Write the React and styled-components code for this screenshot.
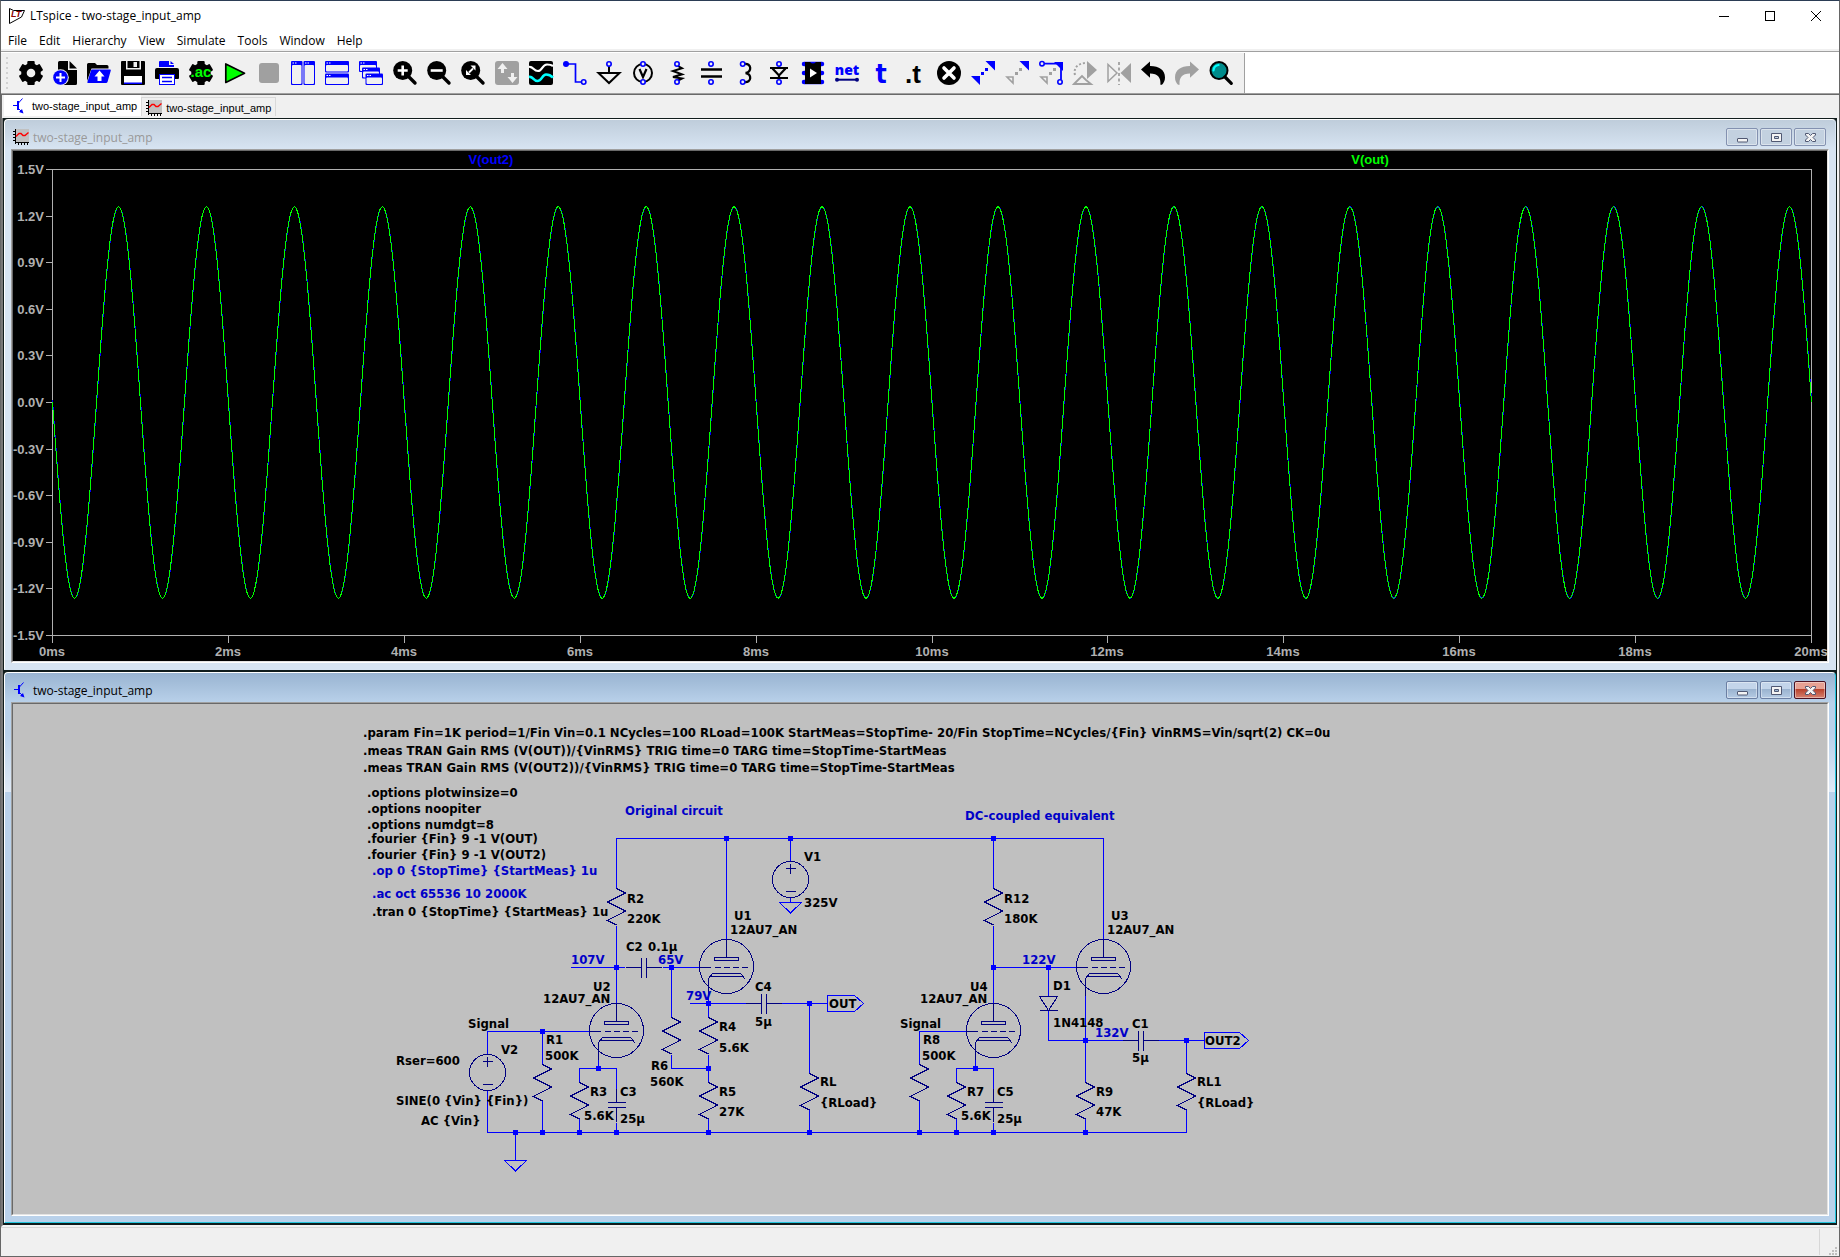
import React from "react";
import styled, { createGlobalStyle, css } from "styled-components";

const uiFont = `"Open Sans", "Noto Sans", sans-serif`
const tahoma = `"DejaVu Sans Condensed", "DejaVu Sans", sans-serif`
const arial = `"Liberation Sans", Arial, sans-serif`

const face = "#f0f0f0"
const blue = "#0000ff"
const navy = "#000080"
const comment = "#0000c8"
const grey = "#a0a0a0"

const GlobalStyle = createGlobalStyle`
  * {
    box-sizing: border-box;
  }
  body {
    margin: 0;
    background: ${face};
    font-family: ${uiFont};
    font-size: 12px;
    color: #000;
  }
  button {
    margin: 0;
    padding: 0;
    border: 0;
    background: none;
    font: inherit;
    color: inherit;
  }
  svg {
    display: block;
  }
`

//Application frame
const Frame = styled.div`
  display: flex;
  flex-direction: column;
  min-height: 100vh;
  border: 1px solid #666;
  border-top-color: #2b3d55;
`
const TitleBar = styled.header`
  display: flex;
  align-items: center;
  height: 29px;
  padding-left: 8px;
  background: #fff;
`
const Title = styled.h1`
  flex: 1;
  margin: 0;
  padding-left: 4px;
  font-size: 12px;
  font-weight: 400;
`
const CaptionButton = styled.button`
  display: grid;
  place-items: center;
  width: 46px;
  height: 29px;
`
const MenuBar = styled.nav`
  display: flex;
  align-items: flex-end;
  height: 21px;
  padding-left: 1px;
  background: #fff;
  border-bottom: 2px solid ${face};
`
const MenuItem = styled.button`
  padding: 0 6px;
  line-height: 17px;
`

//Toolbar
const ToolbarRow = styled.div`
  display: flex;
  height: 44px;
  background: #fff;
  border-top: 1px solid ${grey};
  border-bottom: 1px solid #696969;
  box-shadow: inset 0 -1px 0 ${grey};
  padding: 1px 0;
`
const Toolbar = styled.div`
  display: flex;
  align-items: center;
  gap: 10px;
  padding: 0 11px 0 4px;
  background: ${face};
  border-right: 1px solid ${grey};
`
const Grip = styled.span`
  width: 4px;
  height: 32px;
  background: radial-gradient(circle, #b4b4b4 1px, transparent 1px) center / 4px 5px repeat-y;
`
const ToolButton = styled.button`
  width: 24px;
  height: 24px;
  flex: none;
  svg {
    overflow: visible;
  }
`

//Document tabs
const TabStrip = styled.div`
  display: flex;
  align-items: flex-end;
  height: 23px;
  padding: 0 0 2px 2px;
  border-left: 1px solid #696969;
`
const Tab = styled.button`
  display: flex;
  align-items: center;
  gap: 4px;
  font-family: ${arial};
  font-size: 11px;
  ${props => props.$active ? css`
    height: 21px;
    padding: 0 4px 0 8px;
    background: #fff;
  ` : css`
    height: 19px;
    padding: 1px 4px 0;
    border: 1px solid #d9d9d9;
    border-bottom: 0;
  `}
`

//MDI child windows
const Workspace = styled.main`
  display: flex;
  flex-direction: column;
  gap: 2px;
  padding: 1px 1px 2px;
  background: #101c1c;
  border-left: 2px solid #777;
  border-right: 2px solid #f4f4f4;
  border-bottom: 2px solid #f4f4f4;
`
const Child = styled.section`
  padding: 0 6px 6px;
  border: 1px solid #fff;
  border-radius: 4px 4px 0 0;
  ${props => props.$active ? css`
    border-right-color: #22c4dc;
    border-bottom-color: #22c4dc;
    background: linear-gradient(#99b4d1, #b9d1ea 30px, #b9d1ea 60px, #e0eaf6 119px, #b9d1ea 119px);
  ` : css`
    border-right-color: #d7e4f2;
    border-bottom-color: #d7e4f2;
    background: linear-gradient(#bfcddb, #d7e4f2 29px);
  `}
`
const ChildBar = styled.header`
  display: flex;
  align-items: center;
  gap: 4px;
  height: 29px;
  padding: 5px 3px 0 2px;
`
const ChildTitle = styled.h2`
  flex: 1;
  margin: 0;
  font-size: 12px;
  font-weight: 400;
  color: ${props => props.$active ? "#000" : "#999"};
`
const ChildButtons = styled.div`
  display: flex;
  gap: 2px;
  align-self: flex-start;
  padding-top: 3px;
`
const buttonFill = {
  idle: css`
    border-color: #8391b0;
    background: #c3d1e0;
  `,
  active: css`
    border-color: #6b7fa3;
    background: linear-gradient(#c3d5ea 45%, #9ab3cf 45%, #b5cbe4);
  `,
  close: css`
    border-color: #4a1020;
    background: linear-gradient(#e6a193 45%, #b8412b 45%, #d68271);
  `,
}
const ChildButton = styled.button`
  display: grid;
  place-items: center;
  width: 32px;
  height: 18px;
  border: 1px solid;
  border-radius: 2px;
  box-shadow: inset 0 0 0 1px rgba(255, 255, 255, 0.4);
  ${props => buttonFill[props.$kind]}
`
const Client = styled.div`
  border: 1px solid;
  border-color: ${grey} #fff #fff ${grey};
`
const Canvas = styled.svg`
  width: 100%;
  height: auto;
  border: 1px solid;
  border-color: #696969 #e3e3e3 #e3e3e3 #696969;
  background: ${props => props.$paper};
`
const PlotText = styled.text`
  font: bold 13px ${arial};
  fill: ${props => props.$ink || "#b0b0b0"};
`
const Label = styled.text`
  font: bold 13px ${tahoma};
  fill: ${props => props.$ink || "#000"};
`

const StatusBar = styled.footer`
  display: flex;
  flex: 1;
  justify-content: flex-end;
  align-items: flex-end;
  min-height: 29px;
  border-top: 1px solid #d7d7d7;
  background: ${face};
  padding: 1px 2px 1px 0;
`
const StatusGrip = styled.div`
  align-self: stretch;
  display: flex;
  align-items: flex-end;
  justify-content: flex-end;
  width: 18px;
  border-left: 1px solid #d7d7d7;
`

//---- Icons ----
const Pin = ({ x = 12, y }) => (
  <circle cx={x} cy={y} r="2.2" fill={face} stroke={blue} strokeWidth="1.6" />
)
const Gear = ({ hole }) => (
  <>
    <circle cx="12" cy="12" r="9.8" />
    {[0, 60, 120].map(a => (
      <rect key={a} x="8.3" y="0" width="7.4" height="24" rx="1" transform={`rotate(${a} 12 12)`} />
    ))}
    {hole && <circle cx="12" cy="12" r="4.3" fill={face} />}
  </>
)
const MiniWindow = ({ x, y, w, h }) => (
  <>
    <rect x={x} y={y} width={w} height={h} rx="1" fill={blue} />
    <rect x={x + 1} y={y + 4} width={w - 2} height={h - 5} rx="1" fill={face} />
    <path d={`M${x + 1.5} ${y + 2}h1.5M${x + 4} ${y + 2}h1.5`} stroke="#fff" />
  </>
)
const Lens = ({ children }) => (
  <>
    <circle cx="9.7" cy="9.5" r="9.5" />
    <path d="M15 15l7 7" stroke="#000" strokeWidth="3.4" strokeLinecap="round" />
    <g stroke="#fff" strokeWidth="2.6" fill="none">{children}</g>
  </>
)
const TurnArrow = ({ fill }) => (
  <path fill={fill} d="M0 8.5L9 0.5v4.6C18 5 24 9 24 16.5c0 3-1.2 5.5-3 7.2h-1.6C20 17 17 12.5 9 12.5v4.3z" />
)

const tools = [
  ["Settings", <Gear hole />],
  ["New schematic", <>
    <path d="M5 1.5a1.5 1.5 0 0 1 1.5-1.5H15v9h9v13.5a1.5 1.5 0 0 1-1.5 1.5H6.5A1.5 1.5 0 0 1 5 22.5z" />
    <path d="M16.5 0L24 7.5h-7.5z" />
    <circle cx="7.5" cy="16.5" r="8.3" fill={face} />
    <circle cx="7.5" cy="16.5" r="7.3" fill={blue} />
    <path d="M7.5 12v9M3 16.5h9" stroke="#fff" strokeWidth="2" />
  </>],
  ["Open", <>
    <path d="M0 20V3.5Q0 2 1.5 2H8l2 2h10q1.5 0 1.5 1.5V7.5H4.5z" />
    <path d="M5 8.5h18q1 0 .8 1L20.5 21q-.3 1-1.5 1H1q-1 0-.6-1L4 9.5q.3-1 1-1z" fill={blue} />
    <path d="M12.5 9.5l5 6h-3V20h-4v-4.5h-3z" fill="#fff" />
  </>],
  ["Save", <>
    <path d="M1 0h22q1 0 1 1v22q0 1-1 1H1q-1 0-1-1V1q0-1 1-1z" />
    <rect x="5" y="0" width="1.5" height="8" fill={face} />
    <rect x="5" y="7" width="15" height="1.5" fill={face} />
    <rect x="12.5" y="1" width="3.5" height="5" fill={face} />
    <rect x="18.5" y="0" width="1.5" height="8" fill={face} />
    <rect x="3" y="15" width="18" height="7" fill="#fff" />
    <rect x="3" y="21.5" width="18" height="1.5" fill={blue} />
  </>],
  ["Print", <>
    <path d="M4 6V1q0-1 1-1h9v4h5v2z" fill={blue} />
    <path d="M15.5 0l3.5 3h-3.5z" fill={blue} />
    <path d="M2 7h20q2 0 2 2v8q0 1-1 1h-3v-4H4v4H1q-1 0-1-1V9q0-2 2-2z" />
    <rect x="4.5" y="13.5" width="15" height="10" fill="#fff" stroke={blue} />
    <path d="M7 16.5h10M7 20.5h10" stroke={blue} strokeWidth="1.5" />
  </>],
  ["Configure analysis", <>
    <Gear />
    <text x="12" y="16" textAnchor="middle" fill="#00ff00" fontFamily={arial} fontWeight="bold" fontSize="15">.ac</text>
  </>],
  ["Run", <path d="M2.8 3v18.5L21.5 12.2z" fill="#00ff00" stroke="#000" strokeWidth="1.7" strokeLinejoin="round" />],
  ["Stop", <rect x="2" y="2" width="20" height="20" rx="3" fill={grey} />],
  ["Tile vertically", <><MiniWindow x={0} y={0} w={11.5} h={24} /><MiniWindow x={12.5} y={0} w={11.5} h={24} /></>],
  ["Tile horizontally", <><MiniWindow x={0} y={0} w={24} h={11.5} /><MiniWindow x={0} y={12.5} w={24} h={11.5} /></>],
  ["Cascade", <><MiniWindow x={0} y={0} w={18} h={11} /><MiniWindow x={3} y={6.5} w={18} h={11} /><MiniWindow x={6.5} y={12.5} w={17.5} h={11.5} /></>],
  ["Zoom in", <Lens><path d="M9.7 4.5v10M4.7 9.5h10" /></Lens>],
  ["Zoom out", <Lens><path d="M3.7 9.5h12" /></Lens>],
  ["Zoom to fit", <Lens>
    <path d="M8 11.5l4-4" strokeWidth="1.8" />
    <path d="M9.5 4.5h5v5zM5 9v5h5z" fill="#fff" stroke="none" />
  </Lens>],
  ["Autorange", <>
    <rect width="24" height="24" rx="3" fill={grey} />
    <path d="M7.5 2l5 6H9v4H6V8H2.5zM17.5 22l-5-6H16v-4h3v4h3.5z" fill={face} />
  </>],
  ["Pick visible traces", <>
    <rect width="24" height="24" rx="2" />
    <path d="M0 6C4 5 4.500 10 9 10S13 3.500 18 3.500q4 0 6 1.500" fill="none" stroke="#fff" strokeWidth="2.2" />
    <path d="M0 16C4 15 4 20 8.500 20S13 13.500 17 13.500q4 0 7 3" fill="none" stroke="#00ffff" strokeWidth="2.6" />
  </>],
  ["Wire", <>
    <path d="M3 3h9.5v18H18" fill="none" stroke={blue} strokeWidth="1.7" />
    <circle cx="3" cy="3" r="3" fill={blue} />
    <Pin x={20.7} y={21} />
  </>],
  ["Ground", <>
    <path d="M12 5v7M1.5 12h21L12 22z" fill="none" stroke="#000" strokeWidth="2" />
    <Pin y={3} />
  </>],
  ["Voltage source", <>
    <circle cx="12" cy="12" r="9" fill="none" stroke="#000" strokeWidth="2" />
    <path d="M8.5 8l3.5 8 3.5-8" fill="none" stroke="#000" strokeWidth="2.2" />
    <Pin y={3} /><Pin y={21} />
  </>],
  ["Resistor", <>
    <path d="M13 5l4 2.3-9 2.7 9 3.3-9 2.7 9 1.5-4 2" fill="none" stroke="#000" strokeWidth="2" />
    <Pin y={3} /><Pin y={21} />
  </>],
  ["Capacitor", <><path d="M2 8.5h21M2 15.5h21" stroke="#000" strokeWidth="2.5" /><Pin y={3} /><Pin y={21} /></>],
  ["Inductor", <>
    <path d="M11 3c8-1.5 8 8.5 1.5 9 6.5 .5 6.5 10.5-1.5 9" fill="none" stroke="#000" strokeWidth="2.3" />
    <Pin x={9.7} y={3} /><Pin x={9.7} y={21} />
  </>],
  ["Diode", <>
    <path d="M3 7h18M5.5 7.5L12 14.5l6.5-7M3 17h18M12 14v4" fill="none" stroke="#000" strokeWidth="2.2" />
    <Pin y={3} /><Pin y={21} />
  </>],
  ["Component", <>
    {[3, 12, 21].map(y => <path key={y} d={`M3 ${y}h18`} stroke={blue} strokeWidth="4.5" strokeLinecap="round" />)}
    <path d="M4 1h5q3 3 6 0h5v22H4z" />
    <path d="M9 7.5l7 4.5-7 4.5z" fill="#fff" />
  </>],
  ["Net name", <>
    <text x="12" y="14" textAnchor="middle" fill={blue} fontFamily={uiFont} fontWeight="800" fontSize="14">net</text>
    <path d="M2 18.7h20" stroke={navy} strokeWidth="2" />
    <circle cx="2" cy="18.7" r="2" fill={navy} /><circle cx="22" cy="18.7" r="2" fill={navy} />
  </>],
  ["Text", <text x="12" y="22" textAnchor="middle" fill={blue} fontFamily={tahoma} fontWeight="bold" fontSize="26">t</text>],
  ["SPICE directive", <text x="10" y="22" textAnchor="middle" fontFamily={arial} fontWeight="bold" fontSize="26">.t</text>],
  ["Delete", <>
    <circle cx="12" cy="12" r="12" />
    <path d="M7 7l10 10M17 7L7 17" stroke="#fff" strokeWidth="3.6" strokeLinecap="round" />
  </>],
  ["Move", <>
    <path d="M14.5 0H24v9.5zM0 15h9v9z" fill={blue} />
    <path d="M14 7h3v3h-3zM10 11h3v3h-3z" fill={blue} />
  </>],
  ["Stretch", <>
    <path d="M14.5 0H24v9.5z" fill={blue} />
    <path d="M14 7h3v3h-3zM10 11h3v3h-3z" fill={grey} />
    <path d="M2 16h6v6z" fill="none" stroke={grey} strokeWidth="1.6" />
  </>],
  ["Drag", <>
    <path d="M15 1h9v9z" fill={blue} />
    <path d="M5 2.7h17v16" fill="none" stroke={blue} strokeWidth="1.8" />
    <path d="M14 7h3v3h-3zM10 11h3v3h-3z" fill={grey} />
    <path d="M2 16h6v6z" fill="none" stroke={grey} strokeWidth="1.6" />
    <Pin x={3} y={2.7} /><Pin x={21} y={21} />
  </>],
  ["Rotate", <>
    <path d="M14 0l10 9-10 9z" fill={grey} />
    <path d="M2 14C0 6 6 2 14 2" fill="none" stroke={grey} strokeWidth="2" strokeDasharray="2 2" />
    <path d="M1 23l4-4 4-4 4 4 5 4z" fill={face} stroke={grey} strokeWidth="1.8" />
  </>],
  ["Mirror", <>
    <path d="M1 3.5v17L10 12z" fill="none" stroke={grey} strokeWidth="1.5" />
    <path d="M24 2v20L13.5 12z" fill={grey} />
    <path d="M12 1v23" stroke={grey} strokeWidth="1.8" strokeDasharray="3 2.5" />
  </>],
  ["Undo", <TurnArrow fill="#000" />],
  ["Redo", <g transform="matrix(-1 0 0 1 24 0)"><TurnArrow fill={grey} /></g>],
  ["Find", <>
    <circle cx="10" cy="9.5" r="8.5" fill="#008b8b" stroke="#000" strokeWidth="2" />
    <path d="M4.5 9.5Q5 4.5 9.5 4" fill="none" stroke="#00ffff" strokeWidth="2.2" strokeLinecap="round" />
    <path d="M16 16l6.3 6.3" stroke="#000" strokeWidth="3.2" strokeLinecap="round" />
  </>],
]

const PlotIcon = () => (
  <svg width="16" height="16" viewBox="0 0 16 16" shapeRendering="crispEdges" aria-hidden="true">
    <rect x="2" width="14" height="13" fill="#c0c0c0" />
    <path d="M2.5 0v15M2 13.5h14M0 2.5h2M0 5.5h2M0 8.5h2M0 11.5h2M5.5 14v2M8.5 14v2M11.5 14v2M14.5 14v2" stroke="#000" />
    <path d="M3 7.5l3-3 2 0 2 2 2 0 3.5-3" fill="none" stroke="#f00" strokeWidth="1.4" shapeRendering="auto" />
  </svg>
)
const BjtIcon = () => (
  <svg width="16" height="16" viewBox="0 0 16 16" aria-hidden="true">
    <path d="M1 7.5h5M10.5 .5l-4.5 5M6 10l4 4" stroke={blue} />
    <path d="M6 3v9" stroke={blue} strokeWidth="2" />
    <path d="M11.5 15.5l-4.5-1.5 3-3z" fill={blue} />
  </svg>
)
const AppIcon = () => (
  <svg width="17" height="16" viewBox="0 0 17 16" aria-hidden="true">
    <path d="M.5 .5L4.500 2.500h11L12.500 9 .5 15.500z" fill="#fff" stroke="#000" />
    <text x="2" y="9" fill="#8b0000" fontFamily={arial} fontWeight="bold" fontStyle="italic" fontSize="9">LT</text>
  </svg>
)

const glyphs = {
  Minimize: <rect x="3.5" y="6.5" width="10" height="3.5" rx=".5" />,
  Maximize: <path fillRule="evenodd" d="M3.5 1.5h10v8h-10zM6.5 4.5v2h4v-2z" />,
  Close: <path d="M3.5 1.5h3l2 2 2-2h3v1.5l-2.5 2.5 2.5 2.5v1.5h-3l-2-2-2 2h-3v-1.5l2.5-2.5-2.5-2.5z" />,
}

const ChildWindow = ({ active, icon, title, children }) => (
  <Child $active={active}>
    <ChildBar>
      {icon}
      <ChildTitle $active={active}>{title}</ChildTitle>
      <ChildButtons>
        {Object.keys(glyphs).map(name => (
          <ChildButton
            key={name}
            aria-label={name}
            $kind={!active ? "idle" : name === "Close" ? "close" : "active"}
          >
            <svg width="17" height="11" viewBox="0 0 17 11" fill="#f4f4f4" stroke="#505872">{glyphs[name]}</svg>
          </ChildButton>
        ))}
      </ChildButtons>
    </ChildBar>
    <Client>{children}</Client>
  </Child>
)

//---- Waveform plot ----
const plot = { left: 39, top: 18, width: 1759, height: 466 }
const cycles = 20
const peak = 1.26

const trace = (phase) => {
  const points = []
  for (let x = 0; x <= plot.width; x++) {
    const v = -peak * Math.sin((x / plot.width) * cycles * 2 * Math.PI + phase)
    points.push(`${plot.left + x},${(plot.top + plot.height * (0.5 - v / 3)).toFixed(1)}`)
  }
  return points.join(" ")
}

const Waveform = () => (
  <Canvas viewBox="0 0 1814 510" $paper="#000" role="img" aria-label="V(out) and V(out2) against time">
    <g transform="translate(.5 .5)" fill="none" shapeRendering="crispEdges">
      <rect x={plot.left} y={plot.top} width={plot.width} height={plot.height} stroke="#b0b0b0" />
      {Array.from({ length: 11 }, (_, i) => {
        const x = Math.round(plot.left + plot.width * i / 10)
        const y = Math.round(plot.top + plot.height * i / 10)
        return <path key={i} d={`M${x} 484v7M${plot.left - 7} ${y}h7`} stroke="#b0b0b0" />
      })}
      <polyline points={trace(-0.015)} stroke={blue} />
      <polyline points={trace(0)} stroke="#00ff00" />
    </g>
    {Array.from({ length: 11 }, (_, i) => (
      <React.Fragment key={i}>
        <PlotText x={31} y={Math.round(plot.top + 5 + plot.height * i / 10)} textAnchor="end">
          {(1.5 - i * 0.3).toFixed(1).replace("-0.0", "0.0")}V
        </PlotText>
        <PlotText x={Math.round(plot.left + plot.width * i / 10)} y={505} textAnchor="middle">
          {i * 2}ms
        </PlotText>
      </React.Fragment>
    ))}
    <PlotText x={478} y={13} textAnchor="middle" $ink={blue}>V(out2)</PlotText>
    <PlotText x={1357} y={13} textAnchor="middle" $ink="#00ff00">V(out)</PlotText>
  </Canvas>
)

//---- Schematic ----
const Resistor = ({ x, y }) => (
  <path d={`M${x} ${y}l9 4.5l-18 9l18 9l-18 9.5l9 4.5`} stroke={navy} />
)
const CapH = ({ x, y }) => (
  <path d={`M${x - 18} ${y}H${x - 2}M${x + 3} ${y}H${x + 18}M${x - 2} ${y - 10}v20M${x + 3} ${y - 10}v20`} stroke={navy} />
)
const CapV = ({ x, y }) => (
  <path d={`M${x} ${y - 16}V${y - 2}M${x} ${y + 3}V${y + 17}M${x - 9} ${y - 2}h18M${x - 9} ${y + 3}h18`} stroke={navy} />
)
const Source = ({ x, y }) => (
  <>
    <circle cx={x} cy={y} r="18" stroke={navy} />
    <path d={`M${x - 5} ${y - 11}h10M${x} ${y - 16}v10M${x - 5} ${y + 12}h10`} stroke={navy} />
  </>
)
const Ground = ({ x, y }) => <path d={`M${x - 11} ${y}h22l-11 10.5z`} stroke={blue} />
const Triode = ({ x, y }) => (
  <g stroke={navy}>
    <circle cx={x} cy={y - 1} r="27" />
    <path d={`M${x} ${y - 28}v18M${x - 12} ${y - 10}h24v3h-24z`} />
    <path d={`M${x - 27} ${y}h11M${x - 12} ${y}h6M${x - 3} ${y}h6M${x + 6} ${y}h6M${x + 15} ${y}h6`} />
    <path d={`M${x - 14} ${y + 6}h28l5 6M${x - 16} ${y + 9}h33M${x - 14} ${y + 6}l-4 5v17`} />
  </g>
)
const Port = ({ x, y, w }) => <path d={`M${x} ${y - 8}h${w - 9}l9 8l-9 8h-${w - 9}z`} stroke={blue} />

const wires = [
  "M616 888V838H1103V939", "M726 838V939", "M790 838V861", "M790 897V902",
  "M616 925V1003", "M570 967H624", "M662 967H699", "M671 967V1017", "M671 1054V1068H708",
  "M708 994V1017", "M708 1054V1082", "M708 1118V1132", "M689 1003H745", "M781 1003H827", "M809 1003V1073", "M809 1109V1132",
  "M487 1054V1031H588", "M542 1031V1064", "M542 1100V1132", "M487 1090V1132H1186V1109",
  "M598 1058V1068", "M579 1082V1068H616V1088", "M579 1118V1132", "M616 1122V1132", "M515 1132V1160",
  "M993 838V888", "M993 925V1003", "M993 967H1076", "M1048 967V996", "M1048 1010V1040H1122",
  "M1085 994V1082", "M1085 1118V1132", "M1158 1040H1204", "M1186 1040V1073",
  "M919 1064V1031H966", "M919 1100V1132", "M975 1058V1068", "M956 1082V1068H993V1088", "M956 1118V1132", "M993 1122V1132",
]
const nodes = [
  [726, 838], [790, 838], [993, 838], [616, 967], [671, 967], [993, 967], [1048, 967],
  [708, 1003], [809, 1003], [542, 1031], [1085, 1040], [1186, 1040], [598, 1068], [708, 1068], [975, 1068],
  [515, 1132], [542, 1132], [579, 1132], [616, 1132], [708, 1132], [809, 1132],
  [919, 1132], [956, 1132], [993, 1132], [1085, 1132],
]
const resistors = [
  [616, 888], [993, 888], [542, 1064], [579, 1082], [671, 1017], [708, 1017], [708, 1082],
  [809, 1073], [919, 1064], [956, 1082], [1085, 1082], [1186, 1073],
]

const labels = [
  [363, 737, ".param Fin=1K period=1/Fin Vin=0.1 NCycles=100 RLoad=100K StartMeas=StopTime- 20/Fin StopTime=NCycles/{Fin} VinRMS=Vin/sqrt(2) CK=0u"],
  [363, 755, ".meas TRAN Gain RMS (V(OUT))/{VinRMS} TRIG time=0 TARG time=StopTime-StartMeas"],
  [363, 772, ".meas TRAN Gain RMS (V(OUT2))/{VinRMS} TRIG time=0 TARG time=StopTime-StartMeas"],
  [367, 797, ".options plotwinsize=0"],
  [367, 813, ".options noopiter"],
  [367, 829, ".options numdgt=8"],
  [367, 843, ".fourier {Fin} 9 -1 V(OUT)"],
  [367, 859, ".fourier {Fin} 9 -1 V(OUT2)"],
  [372, 916, ".tran 0 {StopTime} {StartMeas} 1u"],
  [804, 861, "V1"], [804, 907, "325V"],
  [627, 903, "R2"], [627, 923, "220K"],
  [734, 920, "U1"], [730, 934, "12AU7_AN"],
  [1004, 903, "R12"], [1004, 923, "180K"],
  [1111, 920, "U3"], [1107, 934, "12AU7_AN"],
  [626, 951, "C2"], [648, 951, "0.1µ"],
  [593, 991, "U2"], [543, 1003, "12AU7_AN"],
  [755, 991, "C4"], [755, 1026, "5µ"], [829, 1008, "OUT"],
  [719, 1031, "R4"], [719, 1052, "5.6K"],
  [468, 1028, "Signal"], [501, 1054, "V2"], [396, 1065, "Rser=600"],
  [546, 1044, "R1"], [545, 1060, "500K"],
  [396, 1105, "SINE(0 {Vin} {Fin})"], [421, 1125, "AC {Vin}"],
  [590, 1096, "R3"], [584, 1120, "5.6K"], [620, 1096, "C3"], [620, 1123, "25µ"],
  [651, 1070, "R6"], [650, 1086, "560K"], [719, 1096, "R5"], [719, 1116, "27K"],
  [820, 1086, "RL"], [820, 1107, "{RLoad}"],
  [1053, 990, "D1"], [1053, 1027, "1N4148"],
  [1132, 1028, "C1"], [1132, 1062, "5µ"], [1205, 1045, "OUT2"],
  [970, 991, "U4"], [920, 1003, "12AU7_AN"], [900, 1028, "Signal"],
  [923, 1044, "R8"], [922, 1060, "500K"], [967, 1096, "R7"], [961, 1120, "5.6K"],
  [997, 1096, "C5"], [997, 1123, "25µ"], [1096, 1096, "R9"], [1096, 1116, "47K"],
  [1197, 1086, "RL1"], [1197, 1107, "{RLoad}"],
]

const comments = [
  [372, 875, ".op 0 {StopTime} {StartMeas} 1u"],
  [372, 898, ".ac oct 65536 10 2000K"],
  [625, 815, "Original circuit"],
  [965, 820, "DC-coupled equivalent"],
  [571, 964, "107V"], [658, 964, "65V"], [686, 1000, "79V"],
  [1022, 964, "122V"], [1095, 1037, "132V"],
]

const Schematic = () => (
  <Canvas viewBox="13 704 1814 510" $paper="#c0c0c0" role="img" aria-label="Two stage input amplifier schematic">
    <g transform="translate(.5 .5)" fill="none" shapeRendering="crispEdges">
      <path d={wires.join("")} stroke={blue} />
      {resistors.map(([x, y]) => <Resistor key={`${x} ${y}`} x={x} y={y} />)}
      <Triode x={726} y={967} />
      <Triode x={616} y={1031} />
      <Triode x={1103} y={967} />
      <Triode x={993} y={1031} />
      <CapH x={643} y={967} />
      <CapH x={763} y={1003} />
      <CapH x={1140} y={1040} />
      <CapV x={616} y={1104} />
      <CapV x={993} y={1104} />
      <Source x={790} y={879} />
      <Source x={487} y={1072} />
      <Ground x={790} y={902} />
      <Ground x={515} y={1160} />
      <path d="M1039 996h18l-9 14zM1039 1010h18" stroke={navy} />
      <Port x={827} y={1003} w={36} />
      <Port x={1204} y={1040} w={44} />
      {nodes.map(([x, y]) => (
        <rect key={`${x} ${y}`} x={x - 2.5} y={y - 2.5} width="5" height="5" fill={blue} />
      ))}
    </g>
    {labels.map(([x, y, text]) => <Label key={`${x} ${y}`} x={x} y={y}>{text}</Label>)}
    {comments.map(([x, y, text]) => <Label key={`${x} ${y}`} x={x} y={y} $ink={comment}>{text}</Label>)}
  </Canvas>
)

const menus = ["File", "Edit", "Hierarchy", "View", "Simulate", "Tools", "Window", "Help"]
const doc = "two-stage_input_amp"

export default function App() {
  return (
    <>
      <GlobalStyle />
      <Frame>
        <TitleBar>
          <AppIcon />
          <Title>LTspice - {doc}</Title>
          <CaptionButton aria-label="Minimize application">
            <svg width="10" height="10" stroke="#000" shapeRendering="crispEdges"><path d="M0 5.5h10" /></svg>
          </CaptionButton>
          <CaptionButton aria-label="Maximize application">
            <svg width="10" height="10" stroke="#000" fill="none" shapeRendering="crispEdges"><path d="M.5 .5h9v9h-9z" /></svg>
          </CaptionButton>
          <CaptionButton aria-label="Close application">
            <svg width="10" height="10" stroke="#000"><path d="M0 0l10 10M10 0L0 10" /></svg>
          </CaptionButton>
        </TitleBar>
        <MenuBar>
          {menus.map(name => <MenuItem key={name}>{name}</MenuItem>)}
        </MenuBar>
        <ToolbarRow>
          <Toolbar role="toolbar">
            <Grip />
            {tools.map(([name, drawing]) => (
              <ToolButton key={name} aria-label={name}>
                <svg width="24" height="24" viewBox="0 0 24 24" aria-hidden="true">{drawing}</svg>
              </ToolButton>
            ))}
          </Toolbar>
        </ToolbarRow>
        <TabStrip>
          <Tab $active><BjtIcon />{doc}</Tab>
          <Tab><PlotIcon />{doc}</Tab>
        </TabStrip>
        <Workspace>
          <ChildWindow icon={<PlotIcon />} title={doc}>
            <Waveform />
          </ChildWindow>
          <ChildWindow active icon={<BjtIcon />} title={doc}>
            <Schematic />
          </ChildWindow>
        </Workspace>
        <StatusBar>
          <StatusGrip>
            <svg width="8" height="8" fill="#bfbfbf" aria-hidden="true">
              <path d="M6 0h2v2h-2zM3 3h2v2h-2zM6 3h2v2h-2zM0 6h2v2h-2zM3 6h2v2h-2zM6 6h2v2h-2z" />
            </svg>
          </StatusGrip>
        </StatusBar>
      </Frame>
    </>
  )
}
